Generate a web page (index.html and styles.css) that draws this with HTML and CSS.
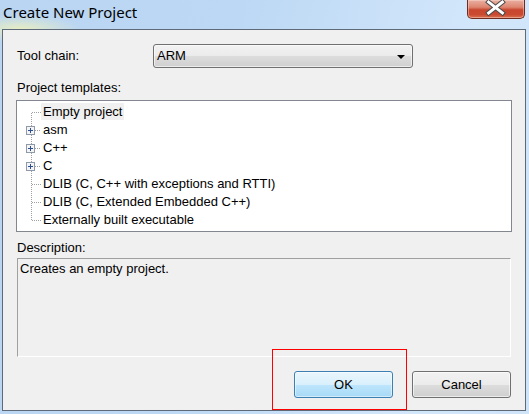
FILE: index.html
```html
<!DOCTYPE html>
<html>
<head>
<meta charset="utf-8">
<link rel="stylesheet" href="styles.css">
</head>
<body>
<div class="window">
  <div class="titlebar">
    <span class="title">Create New Project</span>
    <div class="close">
      <svg width="58" height="18" viewBox="0 0 58 18">
        <path d="M22 2 L36 13 M36 2 L22 13" stroke="#4a4a4a" stroke-width="5" stroke-linecap="square" fill="none"/>
        <path d="M22 2 L36 13 M36 2 L22 13" stroke="#ffffff" stroke-width="3" stroke-linecap="square" fill="none"/>
      </svg>
    </div>
  </div>
  <div class="client">
    <div class="toolchain">
      <span class="lbl tc-label">Tool chain:</span>
      <div class="combo"><span class="combo-text">ARM</span><span class="arrow"></span></div>
    </div>
    <div class="lbl section">Project templates:</div>
    <div class="tree">
      <div class="node">
        <svg class="gutter" width="24" height="18" viewBox="0 0 24 18"><path d="M14.5 10 V18 M15 9.5 H24" class="dots"/></svg>
        <span class="text selected">Empty project</span>
      </div>
      <div class="node">
        <svg class="gutter" width="24" height="18" viewBox="0 0 24 18"><path d="M14.5 0 V18 M18 9.5 H24" class="dots"/><rect x="9.5" y="5.5" width="8" height="8" class="box"/><path d="M11 9.5 H16 M13.5 7 V12" class="plus"/></svg>
        <span class="text">asm</span>
      </div>
      <div class="node">
        <svg class="gutter" width="24" height="18" viewBox="0 0 24 18"><path d="M14.5 0 V18 M18 9.5 H24" class="dots"/><rect x="9.5" y="5.5" width="8" height="8" class="box"/><path d="M11 9.5 H16 M13.5 7 V12" class="plus"/></svg>
        <span class="text">C++</span>
      </div>
      <div class="node">
        <svg class="gutter" width="24" height="18" viewBox="0 0 24 18"><path d="M14.5 0 V18 M18 9.5 H24" class="dots"/><rect x="9.5" y="5.5" width="8" height="8" class="box"/><path d="M11 9.5 H16 M13.5 7 V12" class="plus"/></svg>
        <span class="text">C</span>
      </div>
      <div class="node">
        <svg class="gutter" width="24" height="18" viewBox="0 0 24 18"><path d="M14.5 0 V18 M15 9.5 H24" class="dots"/></svg>
        <span class="text">DLIB (C, C++ with exceptions and RTTI)</span>
      </div>
      <div class="node">
        <svg class="gutter" width="24" height="18" viewBox="0 0 24 18"><path d="M14.5 0 V18 M15 9.5 H24" class="dots"/></svg>
        <span class="text">DLIB (C, Extended Embedded C++)</span>
      </div>
      <div class="node">
        <svg class="gutter" width="24" height="18" viewBox="0 0 24 18"><path d="M14.5 0 V9 M15 9.5 H24" class="dots"/></svg>
        <span class="text">Externally built executable</span>
      </div>
    </div>
    <div class="lbl section2">Description:</div>
    <div class="desc">Creates an empty project.</div>
    <div class="buttons">
      <button class="btn ok">OK</button>
      <button class="btn cancel">Cancel</button>
    </div>
    <div class="annot"></div>
  </div>
</div>
</body>
</html>
```
FILE: styles.css
```css
html, body {
  margin: 0;
  padding: 0;
}
body {
  width: 529px;
  height: 414px;
  overflow: hidden;
  font-family: "Liberation Sans", Arial, sans-serif;
  font-size: 13px;
  color: #000;
}
.window {
  width: 529px;
  height: 414px;
  display: flex;
  flex-direction: column;
  background:
    radial-gradient(ellipse 60px 14px at 20px 29px, rgba(236, 240, 190, 0.9), rgba(236, 240, 190, 0) 100%),
    linear-gradient(100deg, #b9d5f2 0%, #bcd8f4 40%, #d3e7fb 80%, #cfe4f9 100%);
}
.titlebar {
  height: 29px;
  display: flex;
  justify-content: space-between;
  align-items: flex-start;
  flex: none;
}
.title {
  font-family: "Noto Sans", "Open Sans", sans-serif;
  font-size: 15px;
  line-height: 24px;
  padding-left: 3px;
  color: #000;
}
.close {
  width: 58px;
  height: 19px;
  margin-right: 4px;
  box-sizing: border-box;
  border: 1px solid #6e2c20;
  border-top: none;
  border-radius: 0 0 5px 5px;
  background: linear-gradient(180deg, #eab0a2 0%, #dc8570 40%, #c8462e 55%, #c9492f 80%, #d9704e 100%);
  box-shadow: inset 0 0 0 1px rgba(255, 220, 210, 0.45);
  display: flex;
  overflow: hidden;
}
.close svg {
  display: block;
  margin-left: -1px;
}
.client {
  position: relative;
  flex: none;
  height: 382px;
  margin: 0 3px 0 2px;
  box-sizing: border-box;
  border: 1px solid #5f6a78;
  background: #f0f0f0;
  padding: 14px 13px 0 13px;
}
.lbl {
  line-height: 16px;
}
.toolchain {
  display: flex;
  align-items: center;
  height: 24px;
  padding-left: 1px;
}
.tc-label {
  width: 136px;
  flex: none;
}
.combo {
  width: 260px;
  height: 24px;
  box-sizing: border-box;
  border: 1px solid #707070;
  border-radius: 3px;
  background: linear-gradient(180deg, #f2f2f2 0%, #ebebeb 50%, #dddddd 51%, #cfcfcf 100%);
  box-shadow: inset 0 0 0 1px rgba(255, 255, 255, 0.6);
  display: flex;
  align-items: center;
  justify-content: space-between;
  padding: 0 7px 0 3px;
}
.combo-text {
  line-height: 16px;
}
.arrow {
  width: 0;
  height: 0;
  border-left: 4px solid transparent;
  border-right: 4px solid transparent;
  border-top: 4px solid #000;
  margin-top: 1px;
}
.section {
  margin-top: 12px;
  padding-left: 1px;
}
.tree {
  margin-top: 4px;
  height: 132px;
  box-sizing: border-box;
  border: 1px solid #828790;
  background: #fff;
  padding-top: 2px;
}
.node {
  display: flex;
  height: 18px;
  align-items: stretch;
}
.gutter {
  display: block;
  flex: none;
}
.dots {
  stroke: #a0a0a0;
  stroke-width: 1;
  stroke-dasharray: 1 1;
  fill: none;
}
.box {
  fill: #f4f4f4;
  stroke: #8f9aa8;
  stroke-width: 1;
}
.plus {
  stroke: #2b4f8f;
  stroke-width: 1;
  fill: none;
}
.text {
  line-height: 17px;
  height: 17px;
  padding: 0 2px;
  white-space: nowrap;
}
.text.selected {
  background: #f0f0f0;
}
.section2 {
  margin-top: 8px;
  padding-left: 1px;
}
.desc {
  margin: 2px 1px 0 1px;
  height: 99px;
  box-sizing: border-box;
  border: 1px solid;
  border-color: #a0a0a0 #ffffff #ffffff #a0a0a0;
  padding: 2px 2px;
  line-height: 16px;
}
.buttons {
  display: flex;
  justify-content: flex-end;
  gap: 19px;
  margin-top: 14px;
  padding-right: 1px;
}
.btn {
  width: 99px;
  height: 27px;
  box-sizing: border-box;
  border-radius: 3px;
  font-family: "Liberation Sans", Arial, sans-serif;
  font-size: 13px;
  color: #000;
  padding: 0;
  margin: 0;
}
.ok {
  border: 1px solid #3c7fb1;
  background: linear-gradient(180deg, #eaf6fd 0%, #d9f0fc 50%, #bee6fd 51%, #a7d9f5 100%);
  box-shadow: inset 0 0 0 1px rgba(255, 255, 255, 0.5);
}
.cancel {
  border: 1px solid #707070;
  background: linear-gradient(180deg, #f2f2f2 0%, #ebebeb 50%, #dddddd 51%, #cfcfcf 100%);
  box-shadow: inset 0 0 0 1px rgba(255, 255, 255, 0.6);
}
.annot {
  position: absolute;
  left: 269px;
  top: 319px;
  width: 135px;
  height: 61px;
  box-sizing: border-box;
  border: 1px solid #ff0000;
  pointer-events: none;
}
```
